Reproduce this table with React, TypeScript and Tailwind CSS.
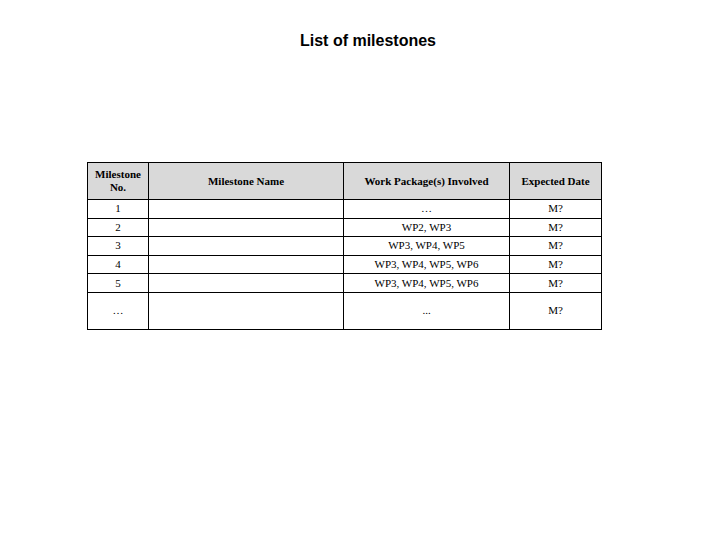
import React from "react";

const rows = [
  { no: "1", wp: "…", date: "M?" },
  { no: "2", wp: "WP2, WP3", date: "M?" },
  { no: "3", wp: "WP3, WP4, WP5", date: "M?" },
  { no: "4", wp: "WP3, WP4, WP5, WP6", date: "M?" },
  { no: "5", wp: "WP3, WP4, WP5, WP6", date: "M?" },
];

const cell = "border border-black text-center align-middle px-1";

const App = () => {
  return (
    <div className="w-[720px] h-[540px] bg-white overflow-hidden">
      <h1 className="pt-[31px] pl-4 text-center text-[16px] leading-[20px] font-bold text-black font-['Liberation_Sans',Arial,sans-serif]">
        List of milestones
      </h1>

      <table className="mt-[111px] ml-[87px] border-collapse table-fixed font-['Liberation_Serif','Times_New_Roman',serif] text-[11px] leading-[13px] text-black">
        <colgroup>
          <col className="w-[61px]" />
          <col className="w-[195px]" />
          <col className="w-[166px]" />
          <col className="w-[92px]" />
        </colgroup>
        <thead>
          <tr className="h-[37px] bg-[#d9d9d9] font-bold">
            <th className={cell}>
              Milestone
              <br />
              No.
            </th>
            <th className={cell}>Milestone Name</th>
            <th className={cell}>Work Package(s) Involved</th>
            <th className={cell}>Expected Date</th>
          </tr>
        </thead>
        <tbody>
          {rows.map((row, i) => (
            <tr key={i} className="h-[18.6px]">
              <td className={cell}>{row.no}</td>
              <td className={cell}></td>
              <td className={cell}>{row.wp}</td>
              <td className={cell}>{row.date}</td>
            </tr>
          ))}
          <tr className="h-[37px]">
            <td className={cell}>…</td>
            <td className={cell}></td>
            <td className={cell}>...</td>
            <td className={cell}>M?</td>
          </tr>
        </tbody>
      </table>
    </div>
  );
};

export default App;
